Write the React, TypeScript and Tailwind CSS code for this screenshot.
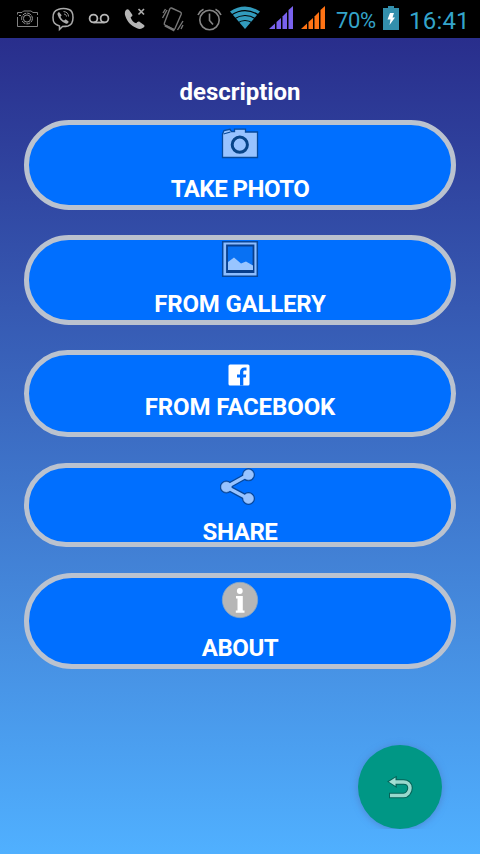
import type { ReactNode } from "react";

function StatusIcon({ x, w, gap = "", children }: { x: number; w: number; gap?: string; children: ReactNode }) {
  return (
    <svg width={w} height={38} viewBox={`${x} 0 ${w} 38`} fill="none" className={`shrink-0 ${gap}`}>
      {children}
    </svg>
  );
}

function Signal({ x, color, gap }: { x: number; color: string; gap: string }) {
  return (
    <StatusIcon x={x} w={24} gap={gap}>
      <g fill={color} transform={`translate(${x} 0)`}>
        <path d="M0 29L6 23.5V29Z" />
        <path d="M7.500 22L12 18V29H7.500Z" />
        <path d="M13.500 16.500L18 12V29H13.500Z" />
        <path d="M19.500 10L24 6V29H19.500Z" />
      </g>
    </StatusIcon>
  );
}

function StatusBar() {
  return (
    <header className="flex h-[38px] w-full items-start bg-black text-[#34a4ca]">
      <StatusIcon x={16} w={23} gap="ml-4">
        <g stroke="#999" strokeWidth="1">
          <path d="M17.500 14.500V12.500H22l1.500-1.500H31l2 1.500h4.500V15M17.500 17v9.500h20V17" strokeOpacity=".85" />
          <circle cx="27" cy="18.500" r="5.400" strokeDasharray="4 1" />
          <circle cx="27" cy="18.500" r="3.600" />
          <path d="M19 15.500h2" />
        </g>
      </StatusIcon>
      <StatusIcon x={52} w={23} gap="ml-[13px]">
        <path d="M58 9.500C61 8.500 66 8.500 69 9.500C72 10.500 73 13 73 17.500C73 22 71.500 25 68 26C66 26.500 64 26.500 62.500 26.500L59.500 29.500V26C54.500 24.500 53 22.500 53 17.500C53 13 54.500 10.500 58 9.500Z" stroke="#aaa" strokeWidth="1.500" />
        <path d="M59 12l2.700 3.200-1.200 1.500c.8 2 1.800 3 3.600 3.800l1.500-1.200 3 2.200c-.2 2-1.500 2.500-3 2-4-1.500-7-4.800-8-8.700-.3-1.300.3-2.300 1.400-2.800Z" fill="#aaa" />
        <path d="M63.500 11.500c3.500.3 5 2.300 5 5M64 14c1.500.2 2.300 1 2.500 2.500" stroke="#999" />
      </StatusIcon>
      <StatusIcon x={88} w={22} gap="ml-[13px]">
        <g stroke="#b5b5b5" strokeWidth="1.800">
          <circle cx="93.500" cy="18.500" r="3.900" />
          <circle cx="104.500" cy="18.500" r="3.900" />
          <path d="M93.500 22.500h11" />
        </g>
      </StatusIcon>
      <StatusIcon x={124} w={22} gap="ml-[14px]">
        <path d="M126 10c1-.8 2-1 3-.1l3.200 4.500c.5.900.2 1.600-.6 2.200l-1 .9c1.200 3 2.800 4.800 5.600 5.800l1.200-1.200c.8-.7 1.500-.8 2.400-.2l4.200 3c.8.700.6 1.800-.5 2.700-2 1.700-4.500 1.700-7 .5-5.500-2.500-9-6-11-11.500-1-2.700-.9-5 .5-6.600Z" fill="#b5b5b5" />
        <path d="M138.500 9l5.500 5.500M144 9l-5.500 5.500" stroke="#aaa" strokeWidth="1.700" />
      </StatusIcon>
      <StatusIcon x={161} w={24} gap="ml-[15px]">
        <g stroke="#777" strokeWidth="1.400">
          <path d="M171.500 8l9 4.200c1 .5 1.100 1 .7 2L175 28.500c-.5 1-1 1.300-2 .8l-8-4.300c-.8-.5-1-1-.6-2l5.400-14c.4-1 .9-1.300 1.700-1Z" />
          <path d="M165 25.500l9.500 4.800" strokeWidth="2.500" />
          <path d="M163 13l2.500-4M162.500 18l4.500-8M177.500 30l5.500-9M181 29l2-4" />
        </g>
      </StatusIcon>
      <StatusIcon x={197} w={25} gap="ml-3">
        <g stroke="#858585" strokeWidth="1.600">
          <circle cx="209.500" cy="20" r="9.700" />
          <path d="M209.500 13.500v7l3.500 4M198 15c1-2.500 3-4.500 5.500-5.700M215.500 9.300c2.500 1.200 4.500 3.200 5.500 5.700" />
        </g>
      </StatusIcon>
      <StatusIcon x={229} w={32} gap="ml-[7px]">
        <path d="M230 11.500Q245 1.500 260 11.500L245 29Z" fill="#329bbd" />
        <path d="M231 15.200Q245 6 259 15.200M234 19Q245 12 256 19M237.500 23Q245 18 252.500 23" stroke="#000" strokeWidth="1.200" />
      </StatusIcon>
      <Signal x={269} color="#7962ee" gap="ml-2" />
      <Signal x={301} color="#ff7314" gap="ml-2" />
      <span className="ml-[11px] w-[46px] whitespace-nowrap pt-[2px] text-[22px] leading-[38px] tracking-[-0.4px]">70%</span>
      <StatusIcon x={383} w={16} gap="ml-px">
        <path d="M388 6h6v2h5v22h-16V8h5Z" fill="#338fac" />
        <path d="M390 13h4l-1.500 4.500h2.500l-5.500 7.500 1-5.500h-3Z" fill="#fff" />
      </StatusIcon>
      <span className="ml-[10px] whitespace-nowrap pt-[2px] text-[24px] leading-[38px] tracking-[0.2px]">16:41</span>
    </header>
  );
}

function CameraIcon() {
  return (
    <svg width="40" height="32" viewBox="220 127 40 32" fill="none">
      <path d="M222.500 134l1.500-3.500 6-1.200 1.500 2.200h3v-2.300h11V132h12v25.500h-35Z" fill="#98c3ff" stroke="#074a9b" strokeWidth="1.300" />
      <path d="M223.500 134l7-2" stroke="#074a9b" strokeWidth="1.200" />
      <circle cx="239.800" cy="144.700" r="7.600" stroke="#084589" strokeWidth="3" />
    </svg>
  );
}

function GalleryIcon() {
  return (
    <svg width="40" height="38" viewBox="220 240 40 38" fill="none">
      <path d="M222.700 241.700h34.600v34.600h-34.600Z" fill="#8cbdff" stroke="#07479b" strokeWidth="1.500" />
      <path d="M227 245.500h26.500v26.500H227Z" fill="#0871f3" stroke="#083f8d" strokeWidth="1.800" />
      <path d="M228 262l6-4.500 7 6 5-2 7 4v5h-25Z" fill="#98c5ff" />
      <path d="M228 271h25" stroke="#083f8d" strokeWidth="2" />
    </svg>
  );
}

function FacebookIcon() {
  return (
    <svg width="22" height="22" viewBox="0 0 22 22">
      <rect x=".5" y=".5" width="21" height="21" rx="1.500" fill="#fff" />
      <path d="M12 21.500v-8H9V10.500h3V8c0-3 1.800-4.500 4.500-4.500H18.500v3h-1.500C15.500 6.500 15.300 7 15.300 8v2.500h3l-.5 3h-2.500v8Z" fill="#006fff" />
    </svg>
  );
}

function ShareShape() {
  return (
    <>
      <circle cx="248.500" cy="474.800" r="5" />
      <circle cx="226.300" cy="487" r="5" />
      <circle cx="248.500" cy="498.500" r="5" />
    </>
  );
}

function ShareIcon() {
  return (
    <svg width="40" height="38" viewBox="220 468 40 38">
      <g fill="#07479b" stroke="#07479b" strokeWidth="3">
        <path d="M248 475l-21.500 12L248 498.500" strokeWidth="6" fill="none" />
        <ShareShape />
      </g>
      <g fill="#98c3ff" stroke="#98c3ff" strokeWidth=".5">
        <path d="M248 475l-21.500 12L248 498.500" strokeWidth="3.400" fill="none" />
        <ShareShape />
      </g>
    </svg>
  );
}

function InfoIcon() {
  return (
    <svg width="38" height="38" viewBox="221 581 38 38">
      <circle cx="240" cy="600" r="17.700" fill="#b6b6b6" stroke="#83a6c8" strokeWidth=".8" />
      <circle cx="239.800" cy="591" r="2.900" fill="#fff" />
      <path d="M236 596h6.800v14.500h1.700v2.300h-8.700v-2.300h1.700V598.500H236Z" fill="#fff" />
    </svg>
  );
}

function MenuButton({ size, icon, iconPad, label, labelPad, tracking }: { size: string; icon: ReactNode; iconPad: string; label: string; labelPad: string; tracking: string }) {
  return (
    <button type="button" className={`flex w-[432px] flex-col items-center overflow-hidden rounded-full border-[5px] border-[#bac2cf] bg-[#006fff] ${size}`}>
      <span className={`flex shrink-0 justify-center ${iconPad}`}>{icon}</span>
      <span className={`shrink-0 whitespace-nowrap text-2xl leading-7 font-bold text-white ${labelPad} ${tracking}`}>{label}</span>
    </button>
  );
}

export default function App() {
  return (
    <div className="flex h-[854px] w-[480px] flex-col overflow-hidden bg-[linear-gradient(180deg,#292e8c_38px,#50b0ff_854px)] font-['Roboto',sans-serif]">
      <StatusBar />
      <main className="flex flex-1 flex-col items-center pt-10">
        <h1 className="h-[42px] text-2xl leading-7 font-bold tracking-[-0.05px] text-white">description</h1>
        <MenuButton size="h-[90px]" icon={<CameraIcon />} iconPad="pt-[2px]" label="TAKE PHOTO" labelPad="mt-4" tracking="tracking-[-0.5px]" />
        <MenuButton size="mt-[25px] h-[90px]" icon={<GalleryIcon />} iconPad="pt-0" label="FROM GALLERY" labelPad="mt-3" tracking="tracking-[-0.2px]" />
        <MenuButton size="mt-[25px] h-[87px]" icon={<FacebookIcon />} iconPad="pt-[9px] mr-[2px]" label="FROM FACEBOOK" labelPad="mt-[7px]" tracking="tracking-[-0.1px]" />
        <MenuButton size="mt-[26px] h-[84px]" icon={<ShareIcon />} iconPad="pt-0" label="SHARE" labelPad="mt-3" tracking="tracking-[-0.4px]" />
        <MenuButton size="mt-[26px] h-[96px]" icon={<InfoIcon />} iconPad="pt-[3px]" label="ABOUT" labelPad="mt-[15px]" tracking="tracking-[-0.4px]" />
        <div className="mt-[67px] mr-[28px] flex h-[93px] w-[104px] justify-center self-end overflow-hidden pt-[9px]">
          <button type="button" aria-label="Back" className="flex size-[84px] shrink-0 items-center justify-center rounded-full bg-[#009785] shadow-[0_1px_7px_rgba(75,110,185,0.6)]">
            <svg width="28" height="26" viewBox="386 774 28 26" fill="none">
              <g stroke="#056358" strokeWidth="5.500">
                <path d="M394 782h9.500c3.500 0 6.500 2 6.500 6s-3 7.500-6.500 7.500H389" />
                <path d="M396 777v9.500l-7.500-5Z" fill="#056358" strokeWidth="1.500" />
              </g>
              <path d="M394 782h9.500c3.500 0 6.500 2 6.500 6s-3 7.500-6.500 7.500H390" stroke="#98d8cd" strokeWidth="3.500" />
              <path d="M395.500 777.500v8.500l-6.700-4.200Z" fill="#a2dfd4" />
            </svg>
          </button>
        </div>
      </main>
    </div>
  );
}
